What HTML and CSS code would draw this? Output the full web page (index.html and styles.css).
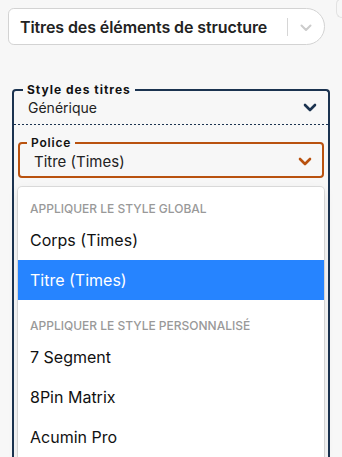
FILE: index.html
```html
<!DOCTYPE html>
<html lang="fr">
<head>
<meta charset="UTF-8">
<title>Titres des éléments de structure</title>
<link rel="stylesheet" href="styles.css">
</head>
<body>

<div class="page">
  <div class="pill">
    <span class="pill-titre">Titres des éléments de structure</span>
    <span class="pill-sep"></span>
    <span class="pill-fleche">
      <svg width="12" height="8" viewBox="0 0 12 8"><polyline points="1.5,1.5 6,6 10.5,1.5" fill="none" stroke="#cccccc" stroke-width="2" stroke-linecap="round" stroke-linejoin="round"/></svg>
    </span>
  </div>

  <fieldset class="bloc-style">
    <legend>Style des titres</legend>
    <div class="ligne-style">
      <span>Générique</span>
      <svg width="14" height="9" viewBox="0 0 14 9"><polyline points="2,2 7,7 12,2" fill="none" stroke="#1b3350" stroke-width="2.6" stroke-linecap="round" stroke-linejoin="round"/></svg>
    </div>
    <div class="pointilles"></div>

    <fieldset class="bloc-police">
      <legend>Police</legend>
      <div class="ligne-police">
        <span>Titre (Times)</span>
        <svg width="14" height="9" viewBox="0 0 14 9"><polyline points="2,2 7,7 12,2" fill="none" stroke="#b9520f" stroke-width="2.6" stroke-linecap="round" stroke-linejoin="round"/></svg>
      </div>
    </fieldset>

    <div class="menu">
      <div class="groupe">
        <div class="groupe-titre">Appliquer le style global</div>
        <div class="option">Corps (Times)</div>
        <div class="option option-choisie">Titre (Times)</div>
      </div>
      <div class="groupe groupe-fin">
        <div class="groupe-titre">Appliquer le style personnalisé</div>
        <div class="option">7 Segment</div>
        <div class="option">8Pin Matrix</div>
        <div class="option">Acumin Pro</div>
      </div>
    </div>
  </fieldset>
</div>

</body>
</html>
```

FILE: styles.css
```css
body {
  margin: 0;
  background-color: #f7f7f7;
  font-family: Inter, "Noto Sans", sans-serif;
  color: #222;
  overflow: hidden;
}
.page {
  padding: 8px 8px 0 8px;
  position: relative;
}
.page::after {
  /* bord d'un bouton rond coupé par la fenêtre */
  content: "";
  position: absolute;
  right: 0;
  top: -2px;
  width: 5px;
  height: 18px;
  border: 1px solid #e2e2e2;
  border-right: none;
  border-radius: 18px 0 0 18px;
}

/* barre du haut */
.pill {
  box-sizing: border-box;
  width: 317px;
  height: 37px;
  display: flex;
  align-items: center;
  background-color: #fff;
  border: 1px solid #d3d3d3;
  border-radius: 6px 19px 19px 6px;
  padding-left: 11px;
}
.pill-titre {
  flex: 1;
  font-size: 16px;
  font-weight: 600;
  color: #222;
  letter-spacing: -0.1px;
}
.pill-sep {
  width: 1px;
  height: 18px;
  background-color: #d6d6d6;
}
.pill-fleche {
  width: 36px;
  display: flex;
  justify-content: center;
  padding-top: 2px;
}

/* fieldset principal */
fieldset {
  margin: 0;
  padding: 0;
  min-width: 0;
}
legend {
  font-size: 12px;
  line-height: 15px;
  font-weight: 700;
  letter-spacing: 1px;
  color: #111;
}
.bloc-style {
  margin: 37px 4px 0 4px;
  border: 2px solid #1b3350;
  border-bottom: none;
  border-radius: 4px 4px 0 0;
}
.bloc-style > legend {
  margin-left: 9px;
  padding: 0 4px;
}
.ligne-style {
  display: flex;
  align-items: center;
  justify-content: space-between;
  height: 21px;
  padding: 0 11px 0 14px;
  font-size: 14px;
  color: #222;
}
.pointilles {
  height: 1px;
  margin-top: 6px;
  background-image: repeating-linear-gradient(to right, #1b3350 0 2px, transparent 2px 4px);
}

/* fieldset police */
.bloc-police {
  margin: 10px 4px 0 4px;
  border: 2px solid #b9520f;
  border-radius: 4px;
}
.bloc-police > legend {
  margin-left: 7px;
  padding: 0 4px;
  font-weight: 600;
  letter-spacing: 0.8px;
}
.ligne-police {
  display: flex;
  align-items: center;
  justify-content: space-between;
  height: 22px;
  padding: 0 10px 4px 14px;
  font-size: 15px;
  color: #222;
}

/* liste déroulante */
.menu {
  margin: 9px 4px 0 4px;
  background-color: #fff;
  border-radius: 4px 4px 0 0;
  box-shadow: 0 0 0 1px rgba(0,0,0,0.1), 0 4px 11px rgba(0,0,0,0.1);
  padding-top: 4px;
}
.groupe {
  padding: 8px 0;
}
.groupe-fin {
  padding-bottom: 0;
}
.groupe-titre {
  padding: 0 12px;
  margin-top: 2px;
  margin-bottom: 3px;
  font-size: 12px;
  line-height: 16px;
  font-weight: 500;
  color: #999;
  text-transform: uppercase;
}
.option {
  padding: 0 12px;
  height: 40px;
  line-height: 40px;
  font-size: 16px;
  color: #111;
}
.option-choisie {
  background-color: #2684ff;
  color: #fff;
}
```
